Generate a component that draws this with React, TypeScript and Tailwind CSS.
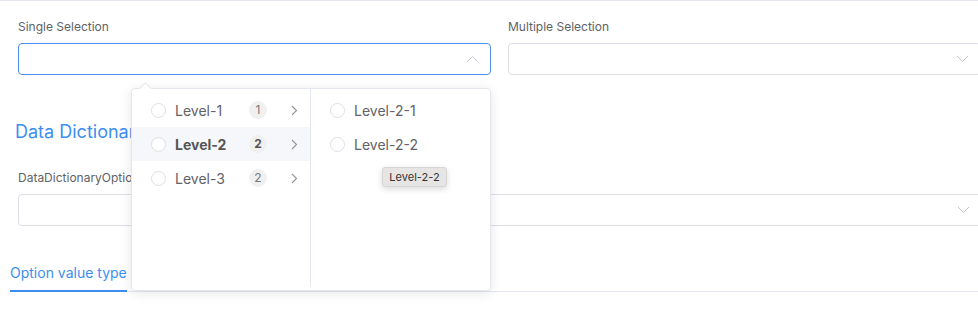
import React from 'react';

const Chevron = ({ up = false }: { up?: boolean }) => (
  <svg width="13" height="8" viewBox="0 0 13 8" fill="none" className="shrink-0">
    <path d={up ? 'M1 7L6.5 1.5L12 7' : 'M1 1L6.5 6.5L12 1'} stroke="#c0c4cc" strokeWidth="1" />
  </svg>
);

const Right = () => (
  <svg width="7" height="11" viewBox="0 0 7 11" fill="none">
    <path d="M1 1L5.5 5.5L1 10" stroke="#909399" strokeWidth="1.1" />
  </svg>
);

const Radio = () => <span className="w-[15px] h-[15px] rounded-full border border-[#dcdfe6] bg-white shrink-0" />;

function Field({ label, focused, up, width }: { label: string; focused?: boolean; up?: boolean; width: string }) {
  return (
    <div className={`${width} shrink-0`}>
      <div className="text-[12px] leading-4 text-[#606266] mb-2">{label}</div>
      <div
        className={`h-[32px] rounded-[4px] border flex items-center justify-end pr-[11px] ${
          focused ? 'border-[#4a90f0]' : 'border-[#dcdfe6]'
        }`}
      >
        <Chevron up={up} />
      </div>
    </div>
  );
}

const levels = [
  { name: 'Level-1', count: 1 },
  { name: 'Level-2', count: 2, active: true },
  { name: 'Level-3', count: 2 },
];

export default function App() {
  return (
    <div className="relative w-[978px] h-[310px] overflow-hidden bg-white border-t border-[#e4e7ed] font-['Inter',sans-serif]">
      <div className="flex gap-[17px] pl-[18px] pt-[18px]">
        <Field label="Single Selection" focused up width="w-[473px]" />
        <Field label="Multiple Selection" width="w-[473px]" />
      </div>

      <h3 className="mt-[45px] pl-[15px] text-[18px] leading-6 text-[#3d8ef0]">Data Dictionary</h3>

      <div className="mt-[26px] pl-[18px]">
        <div className="text-[12px] leading-4 text-[#606266] mb-2">DataDictionaryOptions</div>
        <div className="w-[990px] h-[32px] rounded-[4px] border border-[#dcdfe6] flex items-center justify-end pr-[37px]">
          <Chevron />
        </div>
      </div>

      <div className="mt-[37px] ml-[10px] border-b border-[#e4e7ed] flex">
        <div className="pb-[7px] -mb-px border-b-2 border-[#3d8ef0] text-[14px] leading-5 text-[#3d8ef0]">
          Option value type
        </div>
      </div>

      {/* cascader dropdown */}
      <div className="absolute left-[131px] top-[87px] w-[360px] h-[203px] bg-white border border-[#e4e7ed] rounded-[4px] shadow-[0_2px_12px_rgba(0,0,0,0.1)] flex">
        <span className="absolute left-[9px] -top-[5px] w-[9px] h-[9px] rotate-45 bg-white border-l border-t border-[#e4e7ed]" />
        <div className="w-[179px] border-r border-[#e4e7ed] pt-[4px] mb-[4px]">
          {levels.map((l) => (
            <div
              key={l.name}
              className={`h-[34px] flex items-center pl-[19px] ${l.active ? 'bg-[#f5f7fa]' : ''}`}
            >
              <Radio />
              <span
                className={`ml-[9px] w-[74px] text-[14px] ${
                  l.active ? 'font-bold text-[#555]' : 'text-[#606266]'
                }`}
              >
                {l.name}
              </span>
              <span
                className={`w-[18px] h-[18px] rounded-full bg-[#f0f0f0] flex items-center justify-center text-[12px] ${
                  l.active ? 'font-bold text-[#555]' : 'text-[#777]'
                }`}
              >
                {l.count}
              </span>
              <span className="ml-[24px] flex">
                <Right />
              </span>
            </div>
          ))}
        </div>
        <div className="flex-1 pt-[4px]">
          {['Level-2-1', 'Level-2-2'].map((n) => (
            <div key={n} className="h-[34px] flex items-center pl-[19px]">
              <Radio />
              <span className="ml-[9px] text-[14px] text-[#606266]">{n}</span>
            </div>
          ))}
        </div>
      </div>

      {/* tooltip */}
      <div className="absolute left-[382px] top-[166px] w-[65px] h-[20px] rounded-[3px] bg-[#e6e5e3] border border-[#d6d6d6] shadow-[0_2px_6px_rgba(0,0,0,0.15)] flex items-center justify-center text-[11px] text-[#333]">
        Level-2-2
      </div>
    </div>
  );
}
